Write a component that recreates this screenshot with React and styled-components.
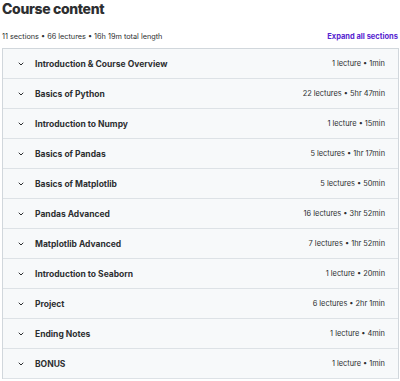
import React from 'react'
import styled, { createGlobalStyle } from 'styled-components'

const Global = createGlobalStyle`
body {
  margin: 0;
  background: #fff;
  font-family: Inter, "Noto Sans", sans-serif;
  color: #2d2f31;
}
`

const Page = styled.div`
width: 400px;
height: 381px;
padding: 0 2px;
box-sizing: border-box;
overflow: hidden;
`

const Title = styled.h2`
margin: 0;
font-size: 14px;
line-height: 18px;
font-weight: 800;
letter-spacing: -0.35px;
`

const Meta = styled.div`
display: flex;
justify-content: space-between;
align-items: center;
margin-top: 12px;
height: 12px;
`

const Stats = styled.span`
font-size: 7.3px;
color: #2d2f31;
`

const Expand = styled.span`
font-size: 7.5px;
font-weight: 700;
color: #5624d0;
`

const List = styled.div`
margin-top: 6px;
border: 1px solid #d1d7dc;
border-bottom: none;
width: 395px;
`

const Row = styled.div`
display: flex;
align-items: center;
height: 29px;
background: #f7f9fa;
border-bottom: 1px solid #dde2e6;
padding: 0 13px 0 14px;
`

const Chevron = styled.svg`
width: 8px;
height: 8px;
margin-right: 10px;
flex-shrink: 0;
`

const Name = styled.span`
flex: 1;
font-size: 8.5px;
font-weight: 700;
`

const Info = styled.span`
font-size: 7.4px;
color: #2d2f31;
`

const sections = [
  ['Introduction & Course Overview', '1 lecture • 1min'],
  ['Basics of Python', '22 lectures • 5hr 47min'],
  ['Introduction to Numpy', '1 lecture • 15min'],
  ['Basics of Pandas', '5 lectures • 1hr 17min'],
  ['Basics of Matplotlib', '5 lectures • 50min'],
  ['Pandas Advanced', '16 lectures • 3hr 52min'],
  ['Matplotlib Advanced', '7 lectures • 1hr 52min'],
  ['Introduction to Seaborn', '1 lecture • 20min'],
  ['Project', '6 lectures • 2hr 1min'],
  ['Ending Notes', '1 lecture • 4min'],
  ['BONUS', '1 lecture • 1min'],
]

const App = () => {
  return (
    <Page>
      <Global />
      <Title>Course content</Title>
      <Meta>
        <Stats>11 sections • 66 lectures • 16h 19m total length</Stats>
        <Expand>Expand all sections</Expand>
      </Meta>
      <List>
        {sections.map(([name, info]) => (
          <Row key={name}>
            <Chevron viewBox="0 0 24 24" fill="none" stroke="#2d2f31" strokeWidth="3" strokeLinecap="round" strokeLinejoin="round">
              <path d="M6 9l6 6 6-6" />
            </Chevron>
            <Name>{name}</Name>
            <Info>{info}</Info>
          </Row>
        ))}
      </List>
    </Page>
  )
}

export default App
